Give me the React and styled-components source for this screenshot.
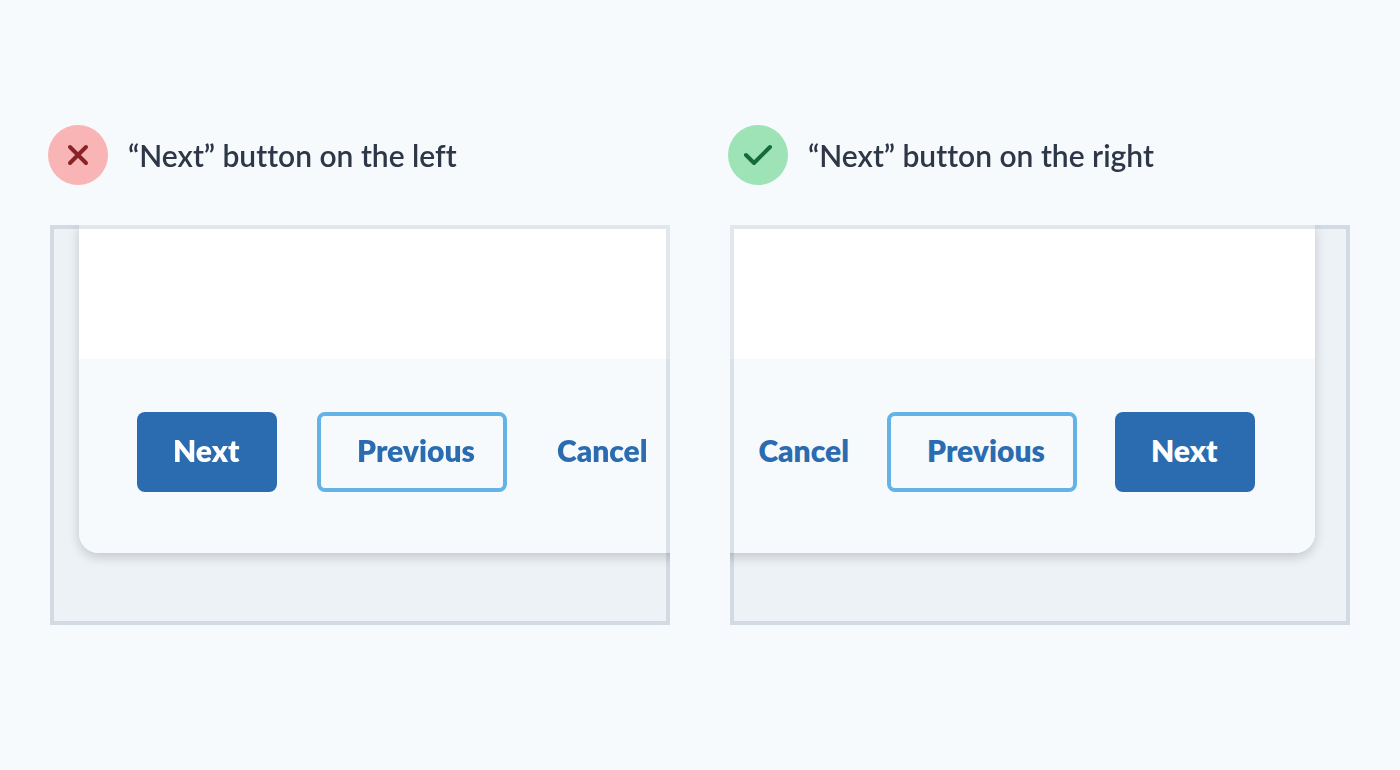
import React from 'react';
import styled, { createGlobalStyle } from 'styled-components';

const examples = [
    { side: 'left', title: '“Next” button on the left', actions: ['Next', 'Previous', 'Cancel'] },
    { side: 'right', title: '“Next” button on the right', actions: ['Cancel', 'Previous', 'Next'] },
];

const App = () => {
    return (
        <>
            <GlobalStyle />
            <Page>
                {examples.map((example) => (
                    <Example key={example.side}>
                        <Heading>
                            <Badge $good={example.side === 'right'}>
                                {example.side === 'right' ? (
                                    <path d="M18 30L26 38L42 22" />
                                ) : (
                                    <path d="M22 22L38 38M38 22L22 38" />
                                )}
                            </Badge>
                            <Title>{example.title}</Title>
                        </Heading>
                        <Stage>
                            <Dialog $side={example.side}>
                                <DialogBody />
                                <DialogFooter $side={example.side}>
                                    {example.actions.map((action) => {
                                        const ActionButton = buttons[action];
                                        return (
                                            <ActionButton key={action} type="button" $side={example.side}>
                                                {action}
                                            </ActionButton>
                                        );
                                    })}
                                </DialogFooter>
                            </Dialog>
                        </Stage>
                    </Example>
                ))}
            </Page>
        </>
    );
};

export default App;

const GlobalStyle = createGlobalStyle`
    * {
        box-sizing: border-box;
    }

    body {
        margin: 0;
        background: #f7fafd;
        color: #2d3748;
        font-family: Lato, "Open Sans", sans-serif;
        font-variant-ligatures: none;
    }
`;

const Page = styled.main`
    display: grid;
    grid-template-columns: minmax(0, 1fr) minmax(0, 1fr);
    gap: 60px;
    min-height: 100vh;
    padding: 125px 50px;
`;

const Example = styled.section`
    display: flex;
    flex-direction: column;
    gap: 40px;
`;

const Heading = styled.header`
    display: flex;
    align-items: center;
    gap: 20px;
    margin: 0 -2px;
`;

const Badge = styled.svg.attrs({ viewBox: '0 0 60 60', 'aria-hidden': true })`
    flex: none;
    width: 60px;
    height: 60px;
    border-radius: 50%;
    background: ${({ $good }) => ($good ? '#9de3b6' : '#f9b5b5')};
    fill: none;
    stroke: ${({ $good }) => ($good ? '#146c3a' : '#892326')};
    stroke-width: 4;
    stroke-linecap: round;
    stroke-linejoin: round;
`;

const Title = styled.h2`
    margin: 0;
    font-size: 30px;
    font-weight: 600;
    line-height: 36px;
    white-space: nowrap;
`;

/* the frame tints whatever lies under it, so it is drawn over the dialog */
const Stage = styled.div`
    position: relative;
    overflow: hidden;
    padding-bottom: 72px;
    background: #edf2f6;

    &::after {
        content: '';
        position: absolute;
        inset: 0;
        border: 4px solid #e2e6ed;
        mix-blend-mode: multiply;
        pointer-events: none;
    }
`;

const Dialog = styled.div`
    margin: ${({ $side }) => ($side === 'left' ? '0 -40px 0 29px' : '0 35px 0 -40px')};
    border-radius: 0 0 20px 20px;
    background: #fff;
    box-shadow: 0 4px 12px rgba(0, 0, 0, 0.18);
`;

const DialogBody = styled.div`
    height: 134px;
`;

const DialogFooter = styled.footer`
    display: flex;
    align-items: center;
    justify-content: ${({ $side }) => ($side === 'left' ? 'flex-start' : 'flex-end')};
    gap: ${({ $side }) => ($side === 'left' ? '40px' : '38px')};
    padding: 53px 60px 61px 58px;
    border-radius: 0 0 20px 20px;
    background: #f7fafd;
`;

const Button = styled.button`
    flex: none;
    height: 80px;
    padding: 0 0 4px 36px;
    border: 0;
    border-radius: 8px;
    background: transparent;
    color: #2b6cb0;
    font-family: inherit;
    font-size: 30px;
    font-weight: 800;
    line-height: 36px;
    text-align: left;
    cursor: pointer;
`;

const PrimaryButton = styled(Button)`
    width: 140px;
    background: #2b6cb0;
    color: #fff;
`;

const OutlineButton = styled(Button)`
    width: 190px;
    border: 4px solid #63b3e7;
`;

const TextButton = styled(Button)`
    padding: ${({ $side }) => ($side === 'left' ? '0 10px 4px' : '0 0 4px')};
`;

const buttons = {
    Next: PrimaryButton,
    Previous: OutlineButton,
    Cancel: TextButton,
};
